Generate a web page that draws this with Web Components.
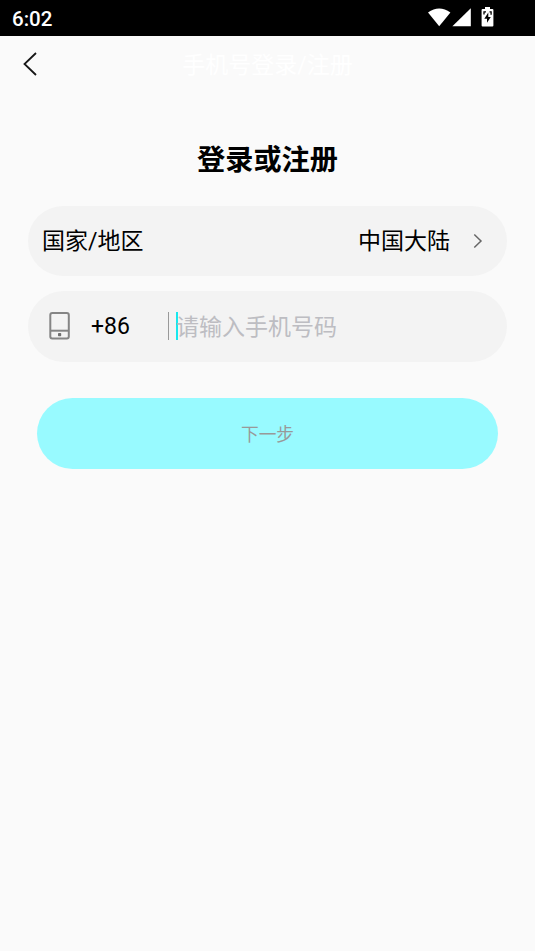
<!DOCTYPE html>
<html lang="zh-CN">
<head>
<meta charset="utf-8">
<title>手机号登录/注册</title>
<style>
html,body{margin:0;height:100%}
body{background:#fafafa;overflow:hidden;font-family:Roboto,"Noto Sans CJK SC",sans-serif;color:#000}
</style>
</head>
<body>
<login-screen></login-screen>
<script>
function define(name, html) {
  const t = document.createElement('template');
  t.innerHTML = html;
  customElements.define(name, class extends HTMLElement {
    constructor() {
      super();
      this.attachShadow({ mode: 'open' }).append(t.content.cloneNode(true));
    }
  });
}

define('status-bar', `
<style>
:host{display:flex;box-sizing:border-box;height:36px;background:#000;color:#fff;align-items:center;justify-content:space-between;padding:2px 39px 0 12px;font-size:20.5px;font-weight:500;line-height:24px}
.icons{display:flex;height:24px;align-items:flex-start}
svg{display:block}
</style>
<span>6:02</span>
<div class="icons">
<svg width="68" height="22" viewBox="0 0 68 22" fill="#fff">
<path d="M0 5.6Q11.2-2.8 22.4 5.6L11.2 19.3Z"/>
<path d="M42.8 1.2V19.3H24.4Z"/>
<path d="M57 0h5v2h2.4q1 0 1 1v15.5q0 1-1 1h-9.8q-1 0-1-1V3q0-1 1-1h2.4Z"/>
<path d="M60.3 5.5V10H62.8L59 15.8V11.7H56.3Z" fill="#000"/>
<path d="M56 7.5V4.8h2M61.5 4.8h1.6v3" fill="none" stroke="#000" stroke-width="1.3"/>
</svg>
</div>`);

define('nav-bar', `
<style>
:host{display:grid;grid-template-columns:60px 1fr 60px;align-items:center;height:57px;font-size:23px;line-height:30px;color:#fff}
svg{display:block;margin:0 0 1px 22px}
span{text-align:center;white-space:nowrap;padding-top:3px}
</style>
<svg width="18" height="26" viewBox="0 0 18 26" fill="none" stroke="#171717" stroke-width="1.8"><path d="M14 2L2.5 13L14 24"/></svg>
<span><slot></slot></span>`);

define('field-row', `
<style>
:host{display:flex;box-sizing:border-box;align-items:center;height:71px;border-radius:36px;background:#f3f3f3;padding:0 24px 0 15px;font-size:23px;line-height:30px;white-space:nowrap}
</style>
<slot></slot>`);

define('chevron-right', `
<style>:host{display:block}svg{display:block}</style>
<svg width="10" height="16" viewBox="0 0 10 16" fill="none" stroke="#666" stroke-width="1.5"><path d="M1.3 1.5L8 8L1.3 14.5"/></svg>`);

define('phone-icon', `
<style>:host{display:block}svg{display:block}</style>
<svg width="22" height="29" viewBox="0 0 22 29" fill="none" stroke="#858585" stroke-width="2"><rect x="1.3" y="1" width="18.5" height="25.5" rx="2"/><path d="M1.8 18.7H19.8"/><rect x="9" y="21.1" width="3.2" height="3.2" rx=".7" fill="#707070" stroke="none"/></svg>`);

define('primary-button', `
<style>
:host{display:flex;box-sizing:border-box;align-items:center;justify-content:center;height:71px;padding-top:3px;border-radius:36px;background:#98faff;color:#999;font-size:17.7px;line-height:24px}
</style>
<slot></slot>`);

define('login-screen', `
<style>
:host{display:block}
h1{margin:48px 0 0;padding-top:1px;text-align:center;font-size:28.2px;line-height:38px;font-weight:700}
main{padding:0 28px}
.region{margin-top:25.5px;height:70.5px}
.phone{margin-top:14.5px}
.cjk{padding-top:3px}
.name{margin-left:-1px}
.value{margin-left:auto;margin-right:23px}
phone-icon{margin-left:6px}
.code{width:77px;margin-left:20px;padding-top:1px}
.line{width:1px;height:28px;background:#999}
.caret{width:2px;height:28px;margin-left:7px;background:#18e8ee}
.hint{color:#bdbdc2;margin-left:-2px}
primary-button{margin:36px 9px 0}
</style>
<status-bar></status-bar>
<nav-bar>手机号登录/注册</nav-bar>
<main>
<h1>登录或注册</h1>
<field-row class="region"><span class="cjk name">国家/地区</span><span class="cjk value">中国大陆</span><chevron-right></chevron-right></field-row>
<field-row class="phone"><phone-icon></phone-icon><span class="code">+86</span><span class="line"></span><span class="caret"></span><span class="cjk hint">请输入手机号码</span></field-row>
<primary-button>下一步</primary-button>
</main>`);
</script>
</body>
</html>
